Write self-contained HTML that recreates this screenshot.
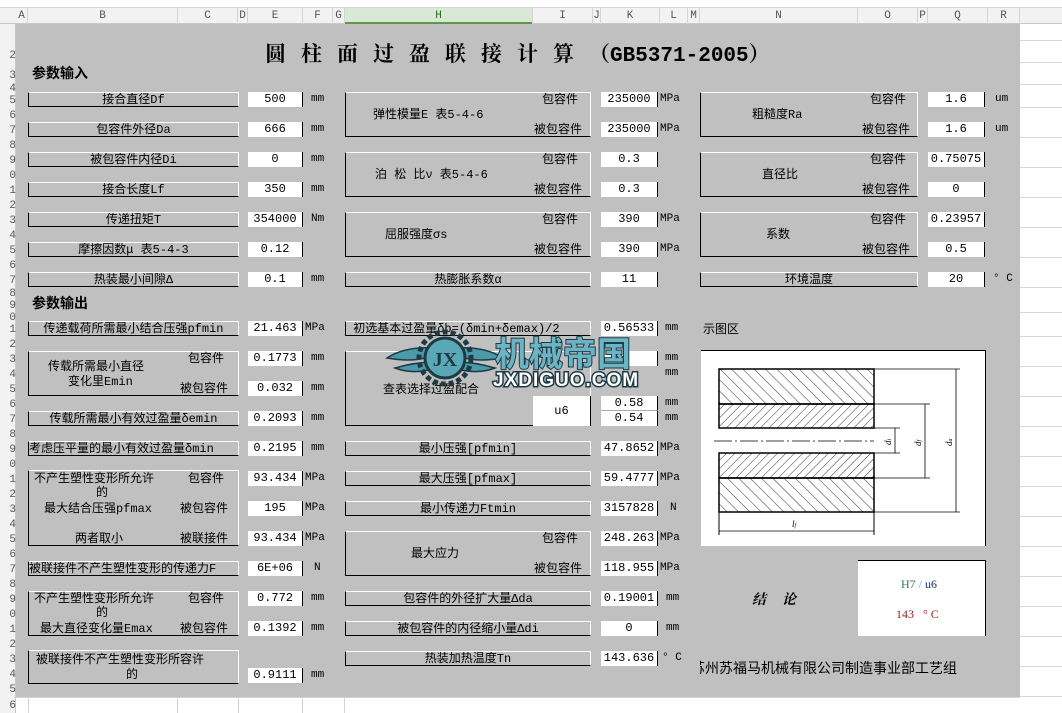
<!DOCTYPE html>
<html><head><meta charset="utf-8"><style>
body{margin:0;width:1062px;height:713px;overflow:hidden;background:#fff;font-family:"Liberation Mono","Noto Sans CJK SC",monospace;position:relative;color:#000}
div{position:absolute;box-sizing:border-box}
.l{border-top:1px solid #fff;border-right:1px solid #fff;border-left:1px solid #000;border-bottom:1px solid #000;font-size:12px;text-align:center;line-height:15px;white-space:nowrap;overflow:hidden}
.v{background:#fff;border-right:1px solid #000;text-align:center;font-size:12px;line-height:15px;height:15px}
.u{font-size:11px;line-height:15px;white-space:nowrap}
.t{font-size:12px;line-height:14px;white-space:nowrap}
.ch{top:8px;height:16px;font-size:11px;line-height:16px;color:#555;text-align:center;border-right:1px solid #d4d4d4}
.rn{left:0;width:16px;font-size:11px;color:#555;text-align:right;line-height:12px}
.gl{left:1020px;width:42px;height:1px;background:#d8d8d8}
</style></head><body>
<div style="left:0;top:0;width:1062px;height:8px;background:#fff;border-bottom:1px solid #d4d4d4"></div>
<div style="left:0;top:8px;width:1062px;height:16px;background:#f2f2f2;border-bottom:1px solid #c8c8c8"></div>
<div style="left:345px;top:8px;width:188px;height:16px;background:#d9e9d5;border-bottom:2px solid #5a9a4a"></div>
<div class="ch" style="left:16px;width:12px">A</div><div class="ch" style="left:28px;width:150px">B</div><div class="ch" style="left:178px;width:60px">C</div><div class="ch" style="left:238px;width:10px">D</div><div class="ch" style="left:248px;width:55px">E</div><div class="ch" style="left:303px;width:30px">F</div><div class="ch" style="left:333px;width:12px">G</div><div class="ch" style="left:345px;width:188px;color:#2a6a2a">H</div><div class="ch" style="left:533px;width:60px">I</div><div class="ch" style="left:593px;width:8px">J</div><div class="ch" style="left:601px;width:59px">K</div><div class="ch" style="left:660px;width:28px">L</div><div class="ch" style="left:688px;width:12px">M</div><div class="ch" style="left:700px;width:158px">N</div><div class="ch" style="left:858px;width:60px">O</div><div class="ch" style="left:918px;width:10px">P</div><div class="ch" style="left:928px;width:60px">Q</div><div class="ch" style="left:988px;width:32px">R</div>
<div style="left:0;top:24px;width:16px;height:689px;background:#f2f2f2;border-right:1px solid #c8c8c8"></div>
<div class="rn" style="top:50px">2</div><div class="rn" style="top:70px">3</div><div class="rn" style="top:83px">4</div><div class="rn" style="top:95px">5</div><div class="rn" style="top:110px">6</div><div class="rn" style="top:125px">7</div><div class="rn" style="top:140px">8</div><div class="rn" style="top:155px">9</div><div class="rn" style="top:170px">0</div><div class="rn" style="top:185px">1</div><div class="rn" style="top:200px">2</div><div class="rn" style="top:215px">3</div><div class="rn" style="top:230px">4</div><div class="rn" style="top:245px">5</div><div class="rn" style="top:260px">6</div><div class="rn" style="top:275px">7</div><div class="rn" style="top:288px">8</div><div class="rn" style="top:300px">9</div><div class="rn" style="top:312px">0</div><div class="rn" style="top:324px">1</div><div class="rn" style="top:339px">2</div><div class="rn" style="top:354px">3</div><div class="rn" style="top:369px">4</div><div class="rn" style="top:384px">5</div><div class="rn" style="top:399px">6</div><div class="rn" style="top:414px">7</div><div class="rn" style="top:429px">8</div><div class="rn" style="top:444px">9</div><div class="rn" style="top:459px">0</div><div class="rn" style="top:474px">1</div><div class="rn" style="top:489px">2</div><div class="rn" style="top:504px">3</div><div class="rn" style="top:519px">4</div><div class="rn" style="top:534px">5</div><div class="rn" style="top:549px">6</div><div class="rn" style="top:564px">7</div><div class="rn" style="top:579px">8</div><div class="rn" style="top:594px">9</div><div class="rn" style="top:609px">0</div><div class="rn" style="top:624px">1</div><div class="rn" style="top:639px">2</div><div class="rn" style="top:654px">3</div><div class="rn" style="top:669px">4</div><div class="rn" style="top:684px">5</div><div class="rn" style="top:700px">6</div>
<div class="gl" style="top:40px"></div><div class="gl" style="top:62px"></div><div class="gl" style="top:84px"></div><div class="gl" style="top:107px"></div><div class="gl" style="top:137px"></div><div class="gl" style="top:167px"></div><div class="gl" style="top:197px"></div><div class="gl" style="top:227px"></div><div class="gl" style="top:257px"></div><div class="gl" style="top:287px"></div><div class="gl" style="top:312px"></div><div class="gl" style="top:336px"></div><div class="gl" style="top:366px"></div><div class="gl" style="top:396px"></div><div class="gl" style="top:426px"></div><div class="gl" style="top:456px"></div><div class="gl" style="top:486px"></div><div class="gl" style="top:516px"></div><div class="gl" style="top:546px"></div><div class="gl" style="top:576px"></div><div class="gl" style="top:606px"></div><div class="gl" style="top:636px"></div><div class="gl" style="top:666px"></div><div class="gl" style="top:696px"></div>
<div style="left:16px;top:697px;width:1004px;height:16px;border-top:1px solid #d4d4d4"></div>
<div style="left:28px;top:697px;width:150px;height:16px;border-left:1px solid #d4d4d4;border-right:1px solid #d4d4d4"></div><div style="left:238px;top:697px;width:65px;height:16px;border-left:1px solid #d4d4d4;border-right:1px solid #d4d4d4"></div><div style="left:333px;top:697px;width:12px;height:16px;border-right:1px solid #d4d4d4"></div>
<div style="left:16px;top:24px;width:1004px;height:673px;background:#c0c0c0"></div>

<div class="t" style="left:265px;top:40px;font-size:21px;line-height:26px;font-weight:bold;font-family:'Noto Serif CJK SC','Liberation Serif',serif"><span style="letter-spacing:15px">圆柱面过盈联接计算</span><span style="font-family:'Liberation Mono','Noto Serif CJK SC',monospace;letter-spacing:0">（GB5371-2005）</span></div>
<div class="t" style="left:32px;top:67px;font-size:14px;font-weight:bold;line-height:16px">参数输入</div>
<div class="t" style="left:32px;top:297px;font-size:14px;font-weight:bold;line-height:16px">参数输出</div>

<div class="l" style="left:28px;top:92px;width:211px;height:15px">接合直径Df</div><div class="v" style="left:248px;top:92px;width:55px">500</div><div class="u" style="left:311px;top:92px">mm</div>
<div class="l" style="left:28px;top:122px;width:211px;height:15px">包容件外径Da</div><div class="v" style="left:248px;top:122px;width:55px">666</div><div class="u" style="left:311px;top:122px">mm</div>
<div class="l" style="left:28px;top:152px;width:211px;height:15px">被包容件内径Di</div><div class="v" style="left:248px;top:152px;width:55px">0</div><div class="u" style="left:311px;top:152px">mm</div>
<div class="l" style="left:28px;top:182px;width:211px;height:15px">接合长度Lf</div><div class="v" style="left:248px;top:182px;width:55px">350</div><div class="u" style="left:311px;top:182px">mm</div>
<div class="l" style="left:28px;top:212px;width:211px;height:15px">传递扭矩T</div><div class="v" style="left:248px;top:212px;width:55px">354000</div><div class="u" style="left:311px;top:212px">Nm</div>
<div class="l" style="left:28px;top:242px;width:211px;height:15px">摩擦因数μ 表5-4-3</div><div class="v" style="left:248px;top:242px;width:55px">0.12</div>
<div class="l" style="left:28px;top:272px;width:211px;height:15px">热装最小间隙Δ</div><div class="v" style="left:248px;top:272px;width:55px">0.1</div><div class="u" style="left:311px;top:272px">mm</div>

<div class="l" style="left:28px;top:321px;width:211px;height:15px">传递载荷所需最小结合压强pfmin</div><div class="v" style="left:248px;top:321px;width:55px">21.463</div><div class="u" style="left:305px;top:321px">MPa</div>
<div class="l" style="left:28px;top:351px;width:211px;height:45px"></div>
<div class="t" style="left:48px;top:360px">传载所需最小直径</div><div class="t" style="left:68px;top:375px">变化里Emin</div>
<div class="t" style="left:188px;top:352px">包容件</div><div class="t" style="left:180px;top:382px">被包容件</div>
<div class="v" style="left:248px;top:351px;width:55px">0.1773</div><div class="u" style="left:311px;top:351px">mm</div>
<div class="v" style="left:248px;top:381px;width:55px">0.032</div><div class="u" style="left:311px;top:381px">mm</div>
<div class="l" style="left:28px;top:411px;width:211px;height:15px">传载所需最小有效过盈量δemin</div><div class="v" style="left:248px;top:411px;width:55px">0.2093</div><div class="u" style="left:311px;top:411px">mm</div>
<div class="l" style="left:28px;top:441px;width:211px;height:15px;text-align:left">考虑压平量的最小有效过盈量δmin</div><div class="v" style="left:248px;top:441px;width:55px">0.2195</div><div class="u" style="left:311px;top:441px">mm</div>
<div class="l" style="left:28px;top:470px;width:211px;height:76px"></div>
<div class="t" style="left:34px;top:472px">不产生塑性变形所允许</div><div class="t" style="left:96px;top:486px">的</div><div class="t" style="left:44px;top:502px">最大结合压强pfmax</div><div class="t" style="left:75px;top:532px">两者取小</div>
<div class="t" style="left:188px;top:472px">包容件</div><div class="t" style="left:180px;top:502px">被包容件</div><div class="t" style="left:180px;top:532px">被联接件</div>
<div class="v" style="left:248px;top:471px;width:55px">93.434</div><div class="u" style="left:305px;top:471px">MPa</div>
<div class="v" style="left:248px;top:501px;width:55px">195</div><div class="u" style="left:305px;top:501px">MPa</div>
<div class="v" style="left:248px;top:531px;width:55px">93.434</div><div class="u" style="left:305px;top:531px">MPa</div>
<div class="l" style="left:28px;top:561px;width:211px;height:15px;text-align:left">被联接件不产生塑性变形的传递力F</div><div class="v" style="left:248px;top:561px;width:55px">6E+06</div><div class="u" style="left:314px;top:561px">N</div>
<div class="l" style="left:28px;top:591px;width:211px;height:45px"></div>
<div class="t" style="left:34px;top:592px">不产生塑性变形所允许</div><div class="t" style="left:96px;top:606px">的</div><div class="t" style="left:40px;top:622px">最大直径变化量Emax</div>
<div class="t" style="left:188px;top:592px">包容件</div><div class="t" style="left:180px;top:622px">被包容件</div>
<div class="v" style="left:248px;top:591px;width:55px">0.772</div><div class="u" style="left:311px;top:591px">mm</div>
<div class="v" style="left:248px;top:621px;width:55px">0.1392</div><div class="u" style="left:311px;top:621px">mm</div>
<div class="l" style="left:28px;top:650px;width:211px;height:34px"></div>
<div class="t" style="left:36px;top:653px">被联接件不产生塑性变形所容许</div><div class="t" style="left:126px;top:668px">的</div>
<div class="v" style="left:248px;top:668px;width:55px">0.9111</div><div class="u" style="left:311px;top:668px">mm</div>

<div class="l" style="left:345px;top:92px;width:246px;height:45px"></div><div class="t" style="left:373px;top:108px">弹性模量E 表5-4-6</div><div class="t" style="left:542px;top:93px">包容件</div><div class="t" style="left:534px;top:123px">被包容件</div>
<div class="v" style="left:601px;top:92px;width:57px">235000</div><div class="u" style="left:660px;top:92px">MPa</div>
<div class="v" style="left:601px;top:122px;width:57px">235000</div><div class="u" style="left:660px;top:122px">MPa</div>
<div class="l" style="left:345px;top:152px;width:246px;height:45px"></div><div class="t" style="left:375px;top:168px">泊 松 比ν 表5-4-6</div><div class="t" style="left:542px;top:153px">包容件</div><div class="t" style="left:534px;top:183px">被包容件</div>
<div class="v" style="left:601px;top:152px;width:57px">0.3</div><div class="v" style="left:601px;top:182px;width:57px">0.3</div>
<div class="l" style="left:345px;top:212px;width:246px;height:45px"></div><div class="t" style="left:385px;top:228px">屈服强度σs</div><div class="t" style="left:542px;top:213px">包容件</div><div class="t" style="left:534px;top:243px">被包容件</div>
<div class="v" style="left:601px;top:212px;width:57px">390</div><div class="u" style="left:660px;top:212px">MPa</div>
<div class="v" style="left:601px;top:242px;width:57px">390</div><div class="u" style="left:660px;top:242px">MPa</div>
<div class="l" style="left:345px;top:272px;width:246px;height:15px">热膨胀系数α</div><div class="v" style="left:601px;top:272px;width:57px">11</div>
<div class="l" style="left:345px;top:321px;width:246px;height:15px;text-align:left">&nbsp;初选基本过盈量δb=(δmin+δemax)/2</div><div class="v" style="left:601px;top:321px;width:57px">0.56533</div><div class="u" style="left:665px;top:321px">mm</div>
<div class="l" style="left:345px;top:351px;width:246px;height:75px"></div><div class="t" style="left:383px;top:383px">查表选择过盈配合</div>
<div class="v" style="left:601px;top:351px;width:57px"></div><div class="u" style="left:665px;top:351px">mm</div><div class="u" style="left:665px;top:366px">mm</div>
<div style="left:533px;top:396px;width:58px;height:30px;background:#fff;border-right:1px solid #000;font-size:12px;text-align:center;line-height:30px">u6</div>
<div class="v" style="left:601px;top:396px;width:57px;border-bottom:1px solid #aaa">0.58</div><div class="v" style="left:601px;top:411px;width:57px">0.54</div>
<div class="u" style="left:665px;top:396px">mm</div><div class="u" style="left:665px;top:411px">mm</div>
<div class="l" style="left:345px;top:441px;width:246px;height:15px">最小压强[pfmin]</div><div class="v" style="left:601px;top:441px;width:57px">47.8652</div><div class="u" style="left:660px;top:441px">MPa</div>
<div class="l" style="left:345px;top:471px;width:246px;height:15px">最大压强[pfmax]</div><div class="v" style="left:601px;top:471px;width:57px">59.4777</div><div class="u" style="left:660px;top:471px">MPa</div>
<div class="l" style="left:345px;top:501px;width:246px;height:15px">最小传递力Ftmin</div><div class="v" style="left:601px;top:501px;width:57px">3157828</div><div class="u" style="left:670px;top:501px">N</div>
<div class="l" style="left:345px;top:531px;width:246px;height:45px"></div><div class="t" style="left:411px;top:547px">最大应力</div><div class="t" style="left:542px;top:532px">包容件</div><div class="t" style="left:534px;top:562px">被包容件</div>
<div class="v" style="left:601px;top:531px;width:57px">248.263</div><div class="u" style="left:660px;top:531px">MPa</div>
<div class="v" style="left:601px;top:561px;width:57px">118.955</div><div class="u" style="left:660px;top:561px">MPa</div>
<div class="l" style="left:345px;top:591px;width:246px;height:15px">包容件的外径扩大量Δda</div><div class="v" style="left:601px;top:591px;width:57px">0.19001</div><div class="u" style="left:666px;top:591px">mm</div>
<div class="l" style="left:345px;top:621px;width:246px;height:15px">被包容件的内径缩小量Δdi</div><div class="v" style="left:601px;top:621px;width:57px">0</div><div class="u" style="left:666px;top:621px">mm</div>
<div class="l" style="left:345px;top:651px;width:246px;height:15px">热装加热温度Tn</div><div class="v" style="left:601px;top:651px;width:57px">143.636</div><div class="u" style="left:662px;top:651px">° C</div>

<div class="l" style="left:700px;top:92px;width:218px;height:45px"></div><div class="t" style="left:752px;top:108px">粗糙度Ra</div><div class="t" style="left:870px;top:93px">包容件</div><div class="t" style="left:862px;top:123px">被包容件</div>
<div class="v" style="left:928px;top:92px;width:57px">1.6</div><div class="u" style="left:995px;top:92px">um</div>
<div class="v" style="left:928px;top:122px;width:57px">1.6</div><div class="u" style="left:995px;top:122px">um</div>
<div class="l" style="left:700px;top:152px;width:218px;height:45px"></div><div class="t" style="left:762px;top:168px">直径比</div><div class="t" style="left:870px;top:153px">包容件</div><div class="t" style="left:862px;top:183px">被包容件</div>
<div class="v" style="left:928px;top:152px;width:57px">0.75075</div><div class="v" style="left:928px;top:182px;width:57px">0</div>
<div class="l" style="left:700px;top:212px;width:218px;height:45px"></div><div class="t" style="left:766px;top:228px">系数</div><div class="t" style="left:870px;top:213px">包容件</div><div class="t" style="left:862px;top:243px">被包容件</div>
<div class="v" style="left:928px;top:212px;width:57px">0.23957</div><div class="v" style="left:928px;top:242px;width:57px">0.5</div>
<div class="l" style="left:700px;top:272px;width:218px;height:15px">环境温度</div><div class="v" style="left:928px;top:272px;width:57px">20</div><div class="u" style="left:993px;top:272px">° C</div>
<div class="t" style="left:703px;top:322px;font-family:'Noto Sans CJK SC',sans-serif">示图区</div>

<svg style="position:absolute;left:701px;top:350px" width="285" height="196" viewBox="701 350 285 196">
<defs>
<pattern id="h1" width="8" height="8" patternUnits="userSpaceOnUse" patternTransform="rotate(-45)"><line x1="0" y1="0" x2="0" y2="8" stroke="#000" stroke-width="0.8"/></pattern>
<pattern id="h2" width="6" height="6" patternUnits="userSpaceOnUse" patternTransform="rotate(45)"><line x1="0" y1="0" x2="0" y2="6" stroke="#000" stroke-width="0.8"/></pattern>
</defs>
<rect x="701" y="350" width="285" height="196" fill="#fff"/>
<line x1="701" y1="350.5" x2="986" y2="350.5" stroke="#000"/><line x1="985.5" y1="350" x2="985.5" y2="546" stroke="#000"/>
<rect x="719" y="369" width="155" height="35" fill="url(#h1)" stroke="#000" stroke-width="1.5"/>
<rect x="719" y="404" width="155" height="24" fill="url(#h2)" stroke="#000" stroke-width="1.5"/>
<rect x="719" y="453" width="155" height="25" fill="url(#h2)" stroke="#000" stroke-width="1.5"/>
<rect x="719" y="478" width="155" height="34" fill="url(#h1)" stroke="#000" stroke-width="1.5"/>
<line x1="714" y1="441" x2="874" y2="441" stroke="#000" stroke-width="0.7" stroke-dasharray="18 3 2 3"/>
<line x1="719" y1="512" x2="719" y2="535" stroke="#000"/><line x1="874" y1="512" x2="874" y2="535" stroke="#000"/>
<line x1="719" y1="531" x2="874" y2="531" stroke="#000" stroke-width="0.8"/>
<g stroke="#000" stroke-width="0.8">
<line x1="874" y1="369" x2="960" y2="369"/><line x1="874" y1="512" x2="960" y2="512"/>
<line x1="874" y1="404" x2="930" y2="404"/><line x1="874" y1="478" x2="930" y2="478"/>
<line x1="874" y1="428" x2="900" y2="428"/><line x1="874" y1="453" x2="900" y2="453"/>
<line x1="956" y1="369" x2="956" y2="512"/><line x1="925" y1="404" x2="925" y2="478"/><line x1="895" y1="428" x2="895" y2="453"/>
</g>
<text x="792" y="527" font-size="9" font-style="italic" font-family="Liberation Serif">l<tspan font-size="6">f</tspan></text>
<text x="0" y="0" font-size="9" font-style="italic" font-family="Liberation Serif" transform="translate(891,445) rotate(-90)">d<tspan font-size="6">i</tspan></text>
<text x="0" y="0" font-size="9" font-style="italic" font-family="Liberation Serif" transform="translate(921,446) rotate(-90)">d<tspan font-size="6">f</tspan></text>
<text x="0" y="0" font-size="9" font-style="italic" font-family="Liberation Serif" transform="translate(952,446) rotate(-90)">d<tspan font-size="6">a</tspan></text>
</svg>

<div class="t" style="left:752px;top:592px;font-size:14px;font-weight:bold;font-style:italic;font-family:'Noto Serif CJK SC',serif;letter-spacing:16px">结论</div>
<div style="left:858px;top:560px;width:128px;height:76px;background:#fff;border-top:1px solid #000;border-right:1px solid #000"></div>
<div class="t" style="left:901px;top:577px;font-family:'Liberation Serif',serif"><span style="color:#2f7a5a">H7</span><span style="color:#4cb8d0"> / </span><span style="color:#1a2a7a">u6</span></div>
<div class="t" style="left:896px;top:607px;color:#a02020;font-family:'Liberation Serif',serif">143 &nbsp; ° C</div>
<div style="left:700px;top:659px;width:288px;height:20px;overflow:hidden"><div class="t" style="left:-9px;top:0;font-size:14px;line-height:18px;font-family:'Noto Sans CJK SC',sans-serif">苏州苏福马机械有限公司制造事业部工艺组</div></div>

<svg style="position:absolute;left:385px;top:328px" width="290" height="62" viewBox="0 0 290 62">
<path d="M2 30 Q20 18 50 20 L40 30 Q25 34 2 30Z M10 40 Q30 34 50 34 L44 42 Q26 46 10 40Z" fill="#4a9aaa" stroke="#1e3a44" stroke-width="1.5"/>
<path d="M118 30 Q100 18 70 20 L80 30 Q95 34 118 30Z M110 40 Q90 34 70 34 L76 42 Q94 46 110 40Z" fill="#4a9aaa" stroke="#1e3a44" stroke-width="1.5"/>
<circle cx="60" cy="30" r="26" fill="none" stroke="#1e3a44" stroke-width="5" stroke-dasharray="5 3"/>
<circle cx="60" cy="30" r="20" fill="#5aa8b6" stroke="#1e3a44" stroke-width="3"/>
<text x="60" y="38" text-anchor="middle" font-size="20" font-weight="bold" font-family="Liberation Serif" fill="#1e3a44">JX</text>
<text x="110" y="38" font-size="34" font-weight="bold" font-family="Noto Sans CJK SC,sans-serif" fill="#6ab4c4" stroke="#1e3a44" stroke-width="2" paint-order="stroke">机械帝国</text>
<text x="108" y="58" font-size="19" font-weight="bold" font-family="Liberation Sans,sans-serif" fill="#fff" stroke="#1e3a44" stroke-width="3" paint-order="stroke" letter-spacing="1">JXDIGUO.COM</text>
</svg>
</body></html>
